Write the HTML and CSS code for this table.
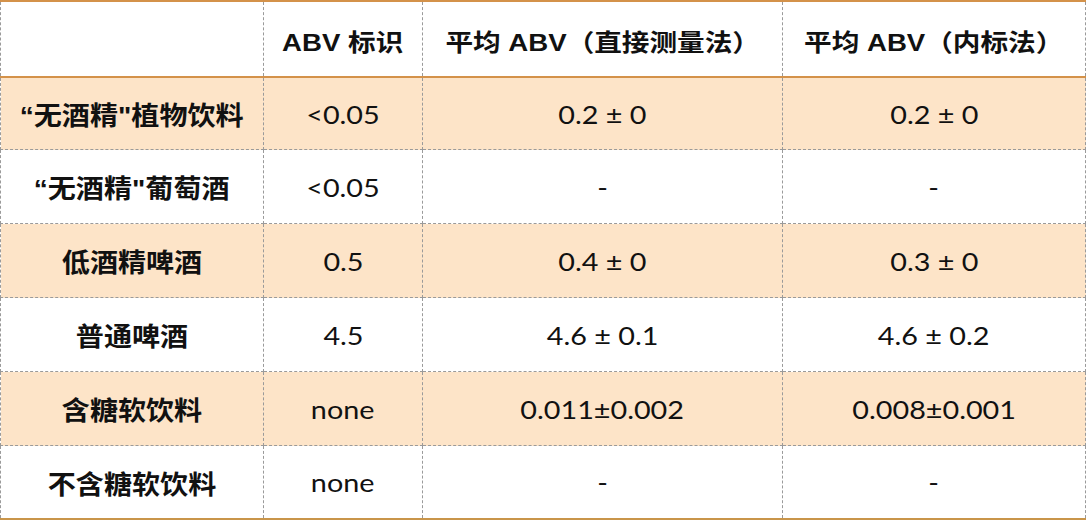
FILE: index.html
```html
<!DOCTYPE html>
<html lang="zh">
<head>
<meta charset="utf-8">
<link rel="stylesheet" href="styles.css">
</head>
<body>
<table class="abv">
  <colgroup>
    <col class="c1"><col class="c2"><col class="c3"><col class="c4">
  </colgroup>
  <thead>
    <tr>
      <th></th>
      <th><span class="wide">ABV 标识</span></th>
      <th><span class="wide">平均 ABV（直接测量法）</span></th>
      <th><span class="wide">平均 ABV（内标法）</span></th>
    </tr>
  </thead>
  <tbody>
    <tr class="alt first">
      <td class="name"><span class="wide"><span class="q">“</span>无酒精<span class="q">"</span>植物饮料</span></td>
      <td><span class="wide">&lt;0.05</span></td>
      <td><span class="wide">0.2 ± 0</span></td>
      <td><span class="wide">0.2 ± 0</span></td>
    </tr>
    <tr>
      <td class="name"><span class="wide"><span class="q">“</span>无酒精<span class="q">"</span>葡萄酒</span></td>
      <td><span class="wide">&lt;0.05</span></td>
      <td><span class="wide">-</span></td>
      <td><span class="wide">-</span></td>
    </tr>
    <tr class="alt">
      <td class="name"><span class="wide">低酒精啤酒</span></td>
      <td><span class="wide">0.5</span></td>
      <td><span class="wide">0.4 ± 0</span></td>
      <td><span class="wide">0.3 ± 0</span></td>
    </tr>
    <tr>
      <td class="name"><span class="wide">普通啤酒</span></td>
      <td><span class="wide">4.5</span></td>
      <td><span class="wide">4.6 ± 0.1</span></td>
      <td><span class="wide">4.6 ± 0.2</span></td>
    </tr>
    <tr class="alt">
      <td class="name"><span class="wide">含糖软饮料</span></td>
      <td><span class="wide">none</span></td>
      <td><span class="wide">0.011±0.002</span></td>
      <td><span class="wide">0.008±0.001</span></td>
    </tr>
    <tr>
      <td class="name"><span class="wide">不含糖软饮料</span></td>
      <td><span class="wide">none</span></td>
      <td><span class="wide">-</span></td>
      <td><span class="wide">-</span></td>
    </tr>
  </tbody>
</table>
</body>
</html>
```

FILE: styles.css
```css
html, body {
  margin: 0;
  padding: 0;
  background: #ffffff;
}

.abv {
  width: 1085px;
  border-collapse: collapse;
  table-layout: fixed;
  font-family: "Lato", "Noto Sans CJK SC", sans-serif;
  color: #111111;
  border-top: 2px solid #d4924a;
  border-bottom: 2px solid #c9954a;
}

.c1 { width: 263px; }
.c2 { width: 159px; }
.c3 { width: 360px; }
.c4 { width: 303px; }

.abv th,
.abv td {
  border-left: 1px dashed #9a9a9a;
  border-right: 1px dashed #9a9a9a;
  text-align: center;
  vertical-align: middle;
  padding: 0;
  white-space: nowrap;
}

.wide {
  display: inline-block;
  transform: scaleX(1.15);
}

.abv th {
  height: 72px;
  padding-top: 2px;
  font-family: "Liberation Sans", "Noto Sans CJK SC", sans-serif;
  font-weight: bold;
  font-size: 24px;
  border-bottom: 2px solid #d4924a;
}

.abv td {
  height: 73px;
  font-size: 25px;
  font-weight: 400;
  border-bottom: 1px dashed #9a9a9a;
}

.abv tr.first td {
  height: 71px;
}

.abv tbody tr:last-child td {
  height: 72px;
  border-bottom: 2px solid #c9954a;
}

.abv td.name {
  font-family: "Noto Sans CJK SC", sans-serif;
  font-weight: bold;
  font-size: 26px;
}

.abv td.name .wide {
  transform: scaleX(1.08);
}

.q {
  font-family: "Liberation Sans", sans-serif;
  font-weight: bold;
}

.abv tr.alt td {
  background: #fde4c8;
}
```
